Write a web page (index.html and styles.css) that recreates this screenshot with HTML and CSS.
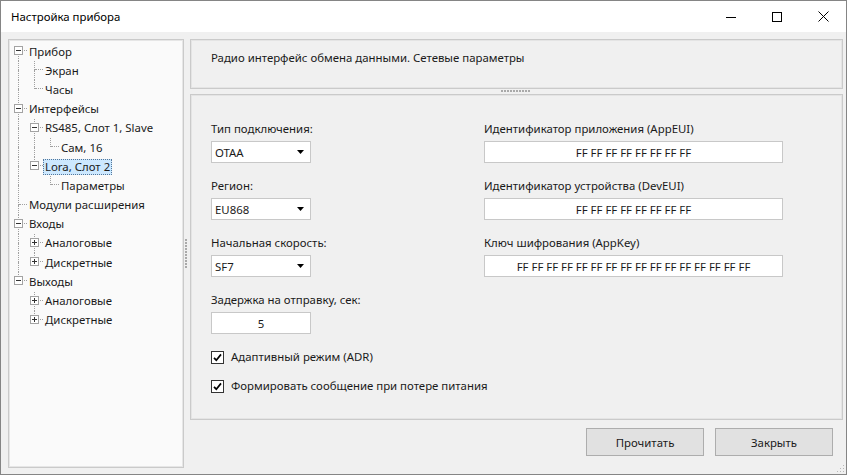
FILE: index.html
```html
<!DOCTYPE html>
<html lang="ru">
<head>
<meta charset="utf-8">
<title>Настройка прибора</title>
<link rel="stylesheet" href="styles.css">
</head>
<body>
<div class="window">
  <div class="titlebar">
    <div class="title">Настройка прибора</div>
    <div class="winbtn"><svg width="10" height="10" viewBox="0 0 10 10"><path d="M0 5.5h10" stroke="#000" stroke-width="1"/></svg></div>
    <div class="winbtn"><svg width="10" height="10" viewBox="0 0 10 10"><rect x="0.5" y="0.5" width="9" height="9" fill="none" stroke="#000"/></svg></div>
    <div class="winbtn"><svg width="11" height="11" viewBox="0 0 11 11"><path d="M0.5 0.5L10.5 10.5M10.5 0.5L0.5 10.5" stroke="#000" stroke-width="1"/></svg></div>
  </div>
  <div class="main">
    <div class="tree">
      <div class="row"><span class="cell f"><i class="a"></i><i class="b"></i><i class="c"></i><svg class="exp" width="9" height="9" viewBox="0 0 9 9"><rect x="0.5" y="0.5" width="8" height="8" fill="#fff" stroke="#a3a3a3"/><path d="M2 4.5h5" stroke="#333"/></svg></span><span class="lbl">Прибор</span></div>
      <div class="row"><span class="cell v"><i class="a"></i><i class="b"></i><i class="c"></i></span><span class="cell t"><i class="a"></i><i class="b"></i><i class="c"></i></span><span class="lbl">Экран</span></div>
      <div class="row"><span class="cell v"><i class="a"></i><i class="b"></i><i class="c"></i></span><span class="cell l"><i class="a"></i><i class="b"></i><i class="c"></i></span><span class="lbl">Часы</span></div>
      <div class="row"><span class="cell t"><i class="a"></i><i class="b"></i><i class="c"></i><svg class="exp" width="9" height="9" viewBox="0 0 9 9"><rect x="0.5" y="0.5" width="8" height="8" fill="#fff" stroke="#a3a3a3"/><path d="M2 4.5h5" stroke="#333"/></svg></span><span class="lbl">Интерфейсы</span></div>
      <div class="row"><span class="cell v"><i class="a"></i><i class="b"></i><i class="c"></i></span><span class="cell t"><i class="a"></i><i class="b"></i><i class="c"></i><svg class="exp" width="9" height="9" viewBox="0 0 9 9"><rect x="0.5" y="0.5" width="8" height="8" fill="#fff" stroke="#a3a3a3"/><path d="M2 4.5h5" stroke="#333"/></svg></span><span class="lbl">RS485, Слот 1, Slave</span></div>
      <div class="row"><span class="cell v"><i class="a"></i><i class="b"></i><i class="c"></i></span><span class="cell v"><i class="a"></i><i class="b"></i><i class="c"></i></span><span class="cell l"><i class="a"></i><i class="b"></i><i class="c"></i></span><span class="lbl">Сам, 16</span></div>
      <div class="row"><span class="cell v"><i class="a"></i><i class="b"></i><i class="c"></i></span><span class="cell l"><i class="a"></i><i class="b"></i><i class="c"></i><svg class="exp" width="9" height="9" viewBox="0 0 9 9"><rect x="0.5" y="0.5" width="8" height="8" fill="#fff" stroke="#a3a3a3"/><path d="M2 4.5h5" stroke="#333"/></svg></span><span class="lbl selected">Lora, Слот 2</span></div>
      <div class="row"><span class="cell v"><i class="a"></i><i class="b"></i><i class="c"></i></span><span class="cell e"><i class="a"></i><i class="b"></i><i class="c"></i></span><span class="cell l"><i class="a"></i><i class="b"></i><i class="c"></i></span><span class="lbl">Параметры</span></div>
      <div class="row"><span class="cell t"><i class="a"></i><i class="b"></i><i class="c"></i></span><span class="lbl">Модули расширения</span></div>
      <div class="row"><span class="cell t"><i class="a"></i><i class="b"></i><i class="c"></i><svg class="exp" width="9" height="9" viewBox="0 0 9 9"><rect x="0.5" y="0.5" width="8" height="8" fill="#fff" stroke="#a3a3a3"/><path d="M2 4.5h5" stroke="#333"/></svg></span><span class="lbl">Входы</span></div>
      <div class="row"><span class="cell v"><i class="a"></i><i class="b"></i><i class="c"></i></span><span class="cell t"><i class="a"></i><i class="b"></i><i class="c"></i><svg class="exp" width="9" height="9" viewBox="0 0 9 9"><rect x="0.5" y="0.5" width="8" height="8" fill="#fff" stroke="#a3a3a3"/><path d="M2 4.5h5M4.5 2v5" stroke="#333"/></svg></span><span class="lbl">Аналоговые</span></div>
      <div class="row"><span class="cell v"><i class="a"></i><i class="b"></i><i class="c"></i></span><span class="cell l"><i class="a"></i><i class="b"></i><i class="c"></i><svg class="exp" width="9" height="9" viewBox="0 0 9 9"><rect x="0.5" y="0.5" width="8" height="8" fill="#fff" stroke="#a3a3a3"/><path d="M2 4.5h5M4.5 2v5" stroke="#333"/></svg></span><span class="lbl">Дискретные</span></div>
      <div class="row"><span class="cell l"><i class="a"></i><i class="b"></i><i class="c"></i><svg class="exp" width="9" height="9" viewBox="0 0 9 9"><rect x="0.5" y="0.5" width="8" height="8" fill="#fff" stroke="#a3a3a3"/><path d="M2 4.5h5" stroke="#333"/></svg></span><span class="lbl">Выходы</span></div>
      <div class="row"><span class="cell e"><i class="a"></i><i class="b"></i><i class="c"></i></span><span class="cell t"><i class="a"></i><i class="b"></i><i class="c"></i><svg class="exp" width="9" height="9" viewBox="0 0 9 9"><rect x="0.5" y="0.5" width="8" height="8" fill="#fff" stroke="#a3a3a3"/><path d="M2 4.5h5M4.5 2v5" stroke="#333"/></svg></span><span class="lbl">Аналоговые</span></div>
      <div class="row"><span class="cell e"><i class="a"></i><i class="b"></i><i class="c"></i></span><span class="cell l"><i class="a"></i><i class="b"></i><i class="c"></i><svg class="exp" width="9" height="9" viewBox="0 0 9 9"><rect x="0.5" y="0.5" width="8" height="8" fill="#fff" stroke="#a3a3a3"/><path d="M2 4.5h5M4.5 2v5" stroke="#333"/></svg></span><span class="lbl">Дискретные</span></div>
    </div>
    <div class="vsplit"><span class="vdots"></span></div>
    <div class="right">
      <div class="panel panel-top">Радио интерфейс обмена данными. Сетевые параметры</div>
      <div class="hsplit"><span class="hdots"></span></div>
      <div class="panel panel-main">
        <div class="col col-left">
          <div class="field">
            <div class="label">Тип подключения:</div>
            <div class="combo"><span>OTAA</span><svg width="7" height="4" viewBox="0 0 7 4"><path d="M0 0h7L3.5 4z" fill="#000"/></svg></div>
          </div>
          <div class="field">
            <div class="label">Регион:</div>
            <div class="combo"><span>EU868</span><svg width="7" height="4" viewBox="0 0 7 4"><path d="M0 0h7L3.5 4z" fill="#000"/></svg></div>
          </div>
          <div class="field">
            <div class="label">Начальная скорость:</div>
            <div class="combo"><span>SF7</span><svg width="7" height="4" viewBox="0 0 7 4"><path d="M0 0h7L3.5 4z" fill="#000"/></svg></div>
          </div>
          <div class="field">
            <div class="label">Задержка на отправку, сек:</div>
            <div class="textbox short">5</div>
          </div>
          <div class="check check-first"><svg width="13" height="13" viewBox="0 0 13 13"><rect x="0.5" y="0.5" width="12" height="12" fill="#fff" stroke="#333"/><path d="M3 6.8L5.3 9.2L10 3.4" fill="none" stroke="#000" stroke-width="1.7"/></svg><span>Адаптивный режим (ADR)</span></div>
          <div class="check check-second"><svg width="13" height="13" viewBox="0 0 13 13"><rect x="0.5" y="0.5" width="12" height="12" fill="#fff" stroke="#333"/><path d="M3 6.8L5.3 9.2L10 3.4" fill="none" stroke="#000" stroke-width="1.7"/></svg><span>Формировать сообщение при потере питания</span></div>
        </div>
        <div class="col col-right">
          <div class="field">
            <div class="label">Идентификатор приложения (AppEUI)</div>
            <div class="textbox wide">FF FF FF FF FF FF FF FF</div>
          </div>
          <div class="field">
            <div class="label">Идентификатор устройства (DevEUI)</div>
            <div class="textbox wide">FF FF FF FF FF FF FF FF</div>
          </div>
          <div class="field">
            <div class="label">Ключ шифрования (AppKey)</div>
            <div class="textbox wide">FF FF FF FF FF FF FF FF FF FF FF FF FF FF FF FF</div>
          </div>
        </div>
      </div>
      <div class="actions">
        <button class="btn">Прочитать</button>
        <button class="btn">Закрыть</button>
      </div>
    </div>
  </div>
  <svg class="grip" width="8" height="8" viewBox="0 0 8 8"><g fill="#b8b8b8"><rect x="6" y="0" width="1" height="1"/><rect x="3" y="3" width="1" height="1"/><rect x="6" y="3" width="1" height="1"/><rect x="0" y="6" width="1" height="1"/><rect x="3" y="6" width="1" height="1"/><rect x="6" y="6" width="1" height="1"/></g></svg>
</div>
</body>
</html>
```
FILE: styles.css
```css
html, body {
  margin: 0;
  padding: 0;
  background: #ffffff;
}
body {
  font-family: "Noto Sans", "Open Sans", sans-serif;
  font-size: 11.4px;
  color: #1a1a1a;
}
.window {
  position: relative;
  width: 847px;
  height: 475px;
  box-sizing: border-box;
  border: 1px solid #858585;
  background: #f0f0f0;
  display: flex;
  flex-direction: column;
}
.titlebar {
  height: 31px;
  flex: none;
  background: #ffffff;
  display: flex;
  align-items: center;
}
.title {
  flex: 1;
  padding-left: 10px;
  color: #000;
}
.winbtn {
  width: 46px;
  height: 31px;
  display: flex;
  align-items: center;
  justify-content: center;
}
.main {
  flex: 1;
  min-height: 0;
  display: grid;
  grid-template-columns: 176px 6px 1fr;
  padding: 7px 3px 6px 7px;
}
.tree {
  background: #fafafa;
  border: 1px solid #cacaca;
  box-shadow: inset 0 0 0 1px #e6e6e6;
  padding: 2px 0 0 2px;
}
.row {
  display: flex;
  align-items: center;
  height: 19.2px;
}
.cell {
  flex: none;
  width: 16px;
  height: 19px;
  display: grid;
  grid-template-columns: 8px 8px;
  grid-template-rows: 9px 10px;
}
.cell i {
  display: block;
  box-sizing: border-box;
}
.cell .a { grid-area: 1 / 1; }
.cell .b { grid-area: 1 / 2; }
.cell .c { grid-area: 2 / 1; }
.cell.v .a, .cell.v .c,
.cell.t .a, .cell.t .c,
.cell.l .a,
.cell.f .c {
  border-right: 1px dotted #a0a0a0;
}
.cell.t .b, .cell.l .b, .cell.f .b {
  border-bottom: 1px dotted #a0a0a0;
}
.cell .exp {
  grid-area: 1 / 1 / 3 / 3;
  align-self: start;
  justify-self: start;
  margin: 4px 0 0 3px;
}
.lbl {
  padding: 0 1px;
  border: 1px dotted transparent;
  line-height: 14px;
  white-space: nowrap;
}
.lbl.selected {
  background: #cce8ff;
  border-color: #557799;
}
.vsplit {
  display: flex;
  align-items: center;
  padding-left: 1px;
}
.vdots {
  width: 2px;
  height: 30px;
  background: repeating-linear-gradient(to bottom, #a9a9a9 0 2px, transparent 2px 3px);
}
.right {
  display: flex;
  flex-direction: column;
  min-width: 0;
}
.panel {
  box-sizing: border-box;
  border: 1px solid #cacaca;
  box-shadow: inset 0 0 0 1px #e4e4e4;
}
.panel-top {
  height: 50px;
  flex: none;
  padding: 10px 20px;
  line-height: 16px;
}
.hsplit {
  height: 5px;
  flex: none;
  display: flex;
  justify-content: center;
  padding-top: 1px;
  box-sizing: border-box;
}
.hdots {
  width: 30px;
  height: 2px;
  margin-left: -2px;
  background: repeating-linear-gradient(to right, #a9a9a9 0 2px, transparent 2px 3px);
}
.panel-main {
  height: 326px;
  flex: none;
  padding: 26px 0 0 20px;
  display: flex;
}
.col {
  display: flex;
  flex-direction: column;
}
.col-left { width: 273px; }
.col-right { width: 299px; }
.field {
  display: flex;
  flex-direction: column;
  gap: 4px;
  margin-bottom: 15px;
}
.label {
  line-height: 16px;
  white-space: nowrap;
}
.combo {
  width: 100px;
  height: 22px;
  box-sizing: border-box;
  border: 1px solid #c8c8c8;
  background: #fff;
  display: flex;
  align-items: center;
  justify-content: space-between;
  padding: 0 6px 0 3px;
}
.textbox {
  height: 22px;
  box-sizing: border-box;
  border: 1px solid #c8c8c8;
  background: #fff;
  display: flex;
  align-items: center;
  justify-content: center;
  white-space: nowrap;
}
.textbox.short { width: 100px; }
.textbox.wide { width: 299px; }
.check {
  display: flex;
  align-items: center;
  gap: 7px;
  line-height: 16px;
  white-space: nowrap;
}
.check svg { flex: none; }
.check-second { margin-top: 13px; }
.actions {
  display: flex;
  justify-content: flex-end;
  gap: 11px;
  padding-right: 10px;
  margin-top: 8px;
}
.btn {
  width: 118px;
  height: 28px;
  box-sizing: border-box;
  border: 1px solid #adadad;
  background: #e1e1e1;
  font: inherit;
  color: #1a1a1a;
  padding: 0;
}
.grip {
  position: absolute;
  right: 1px;
  bottom: 1px;
}
```
